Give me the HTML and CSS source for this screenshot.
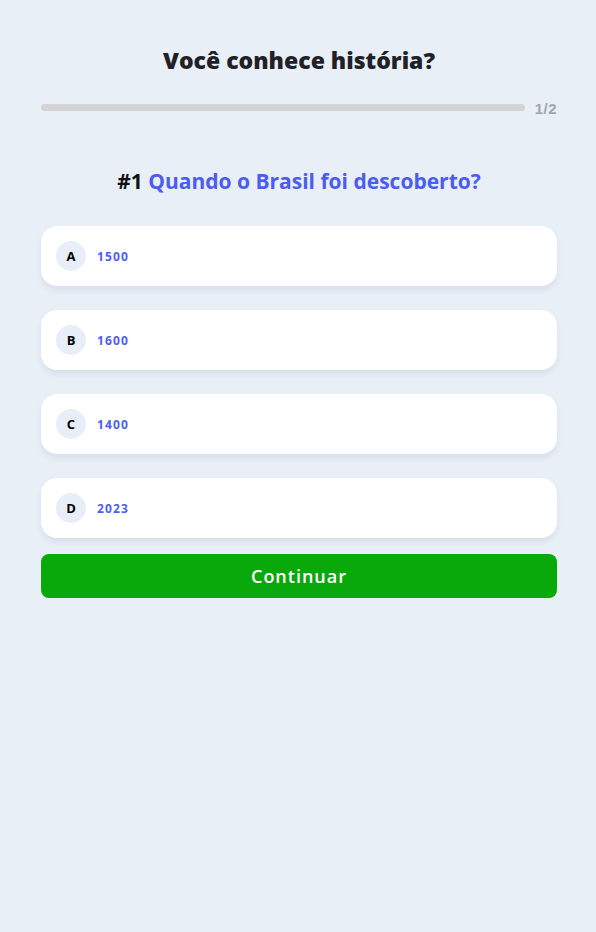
FILE: index.html
```html
<!DOCTYPE html>
<html lang="pt">
<head>
<meta charset="utf-8">
<link rel="stylesheet" href="styles.css">
</head>
<body>
<main class="quiz">
  <h1 class="title">Você conhece história?</h1>
  <div class="progress">
    <div class="track"></div>
    <span class="count">1/2</span>
  </div>
  <h2 class="question"><span class="num">#1</span> Quando o Brasil foi descoberto?</h2>
  <ul class="options">
    <li class="option"><span class="letter">A</span><span class="answer">1500</span></li>
    <li class="option"><span class="letter">B</span><span class="answer">1600</span></li>
    <li class="option"><span class="letter">C</span><span class="answer">1400</span></li>
    <li class="option"><span class="letter">D</span><span class="answer">2023</span></li>
  </ul>
  <button class="continue">Continuar</button>
</main>
</body>
</html>
```
FILE: styles.css
```css
html, body {
  margin: 0;
  padding: 0;
  background: #e8eff7;
}
body {
  font-family: "Open Sans", "Noto Sans", sans-serif;
  min-height: 932px;
}
.quiz {
  padding: 44px 39px 0 41px;
  display: flex;
  flex-direction: column;
}
.title {
  margin: 0;
  text-align: center;
  font-size: 23px;
  font-weight: 800;
  color: #1f2126;
  line-height: 32px;
}
.progress {
  margin-top: 23px;
  display: flex;
  align-items: center;
  gap: 10px;
  height: 16px;
}
.track {
  flex: 1;
  height: 7px;
  border-radius: 4px;
  background: #d4d4d4;
}
.count {
  margin-top: 4px;
  font-family: "Liberation Sans", Arial, sans-serif;
  font-weight: 700;
  font-size: 15px;
  letter-spacing: 0.5px;
  line-height: 16px;
  color: #a2a6ad;
}
.question {
  margin: 52px 0 0;
  text-align: center;
  font-size: 21px;
  font-weight: 700;
  line-height: 28px;
  color: #4a5cf2;
}
.num {
  color: #111;
}
.options {
  list-style: none;
  margin: 31px 0 0;
  padding: 0;
  display: flex;
  flex-direction: column;
  gap: 24px;
}
.option {
  height: 60px;
  background: #fff;
  border-radius: 16px;
  box-shadow: 0 4px 6px rgba(30, 50, 90, 0.08);
  display: flex;
  align-items: center;
  padding-left: 15px;
  gap: 11px;
}
.letter {
  width: 30px;
  height: 30px;
  border-radius: 50%;
  background: #e8eef7;
  display: flex;
  align-items: center;
  justify-content: center;
  font-size: 13px;
  font-weight: 700;
  color: #000;
}
.answer {
  font-size: 12px;
  font-weight: 700;
  letter-spacing: 1.1px;
  color: #4c5ef2;
}
.continue {
  margin-top: 16px;
  height: 44px;
  border: 0;
  border-radius: 8px;
  background: #09a90c;
  color: #fff;
  font-family: "Open Sans", "Noto Sans", sans-serif;
  font-size: 18px;
  font-weight: 600;
  letter-spacing: 1px;
  cursor: pointer;
}
```
